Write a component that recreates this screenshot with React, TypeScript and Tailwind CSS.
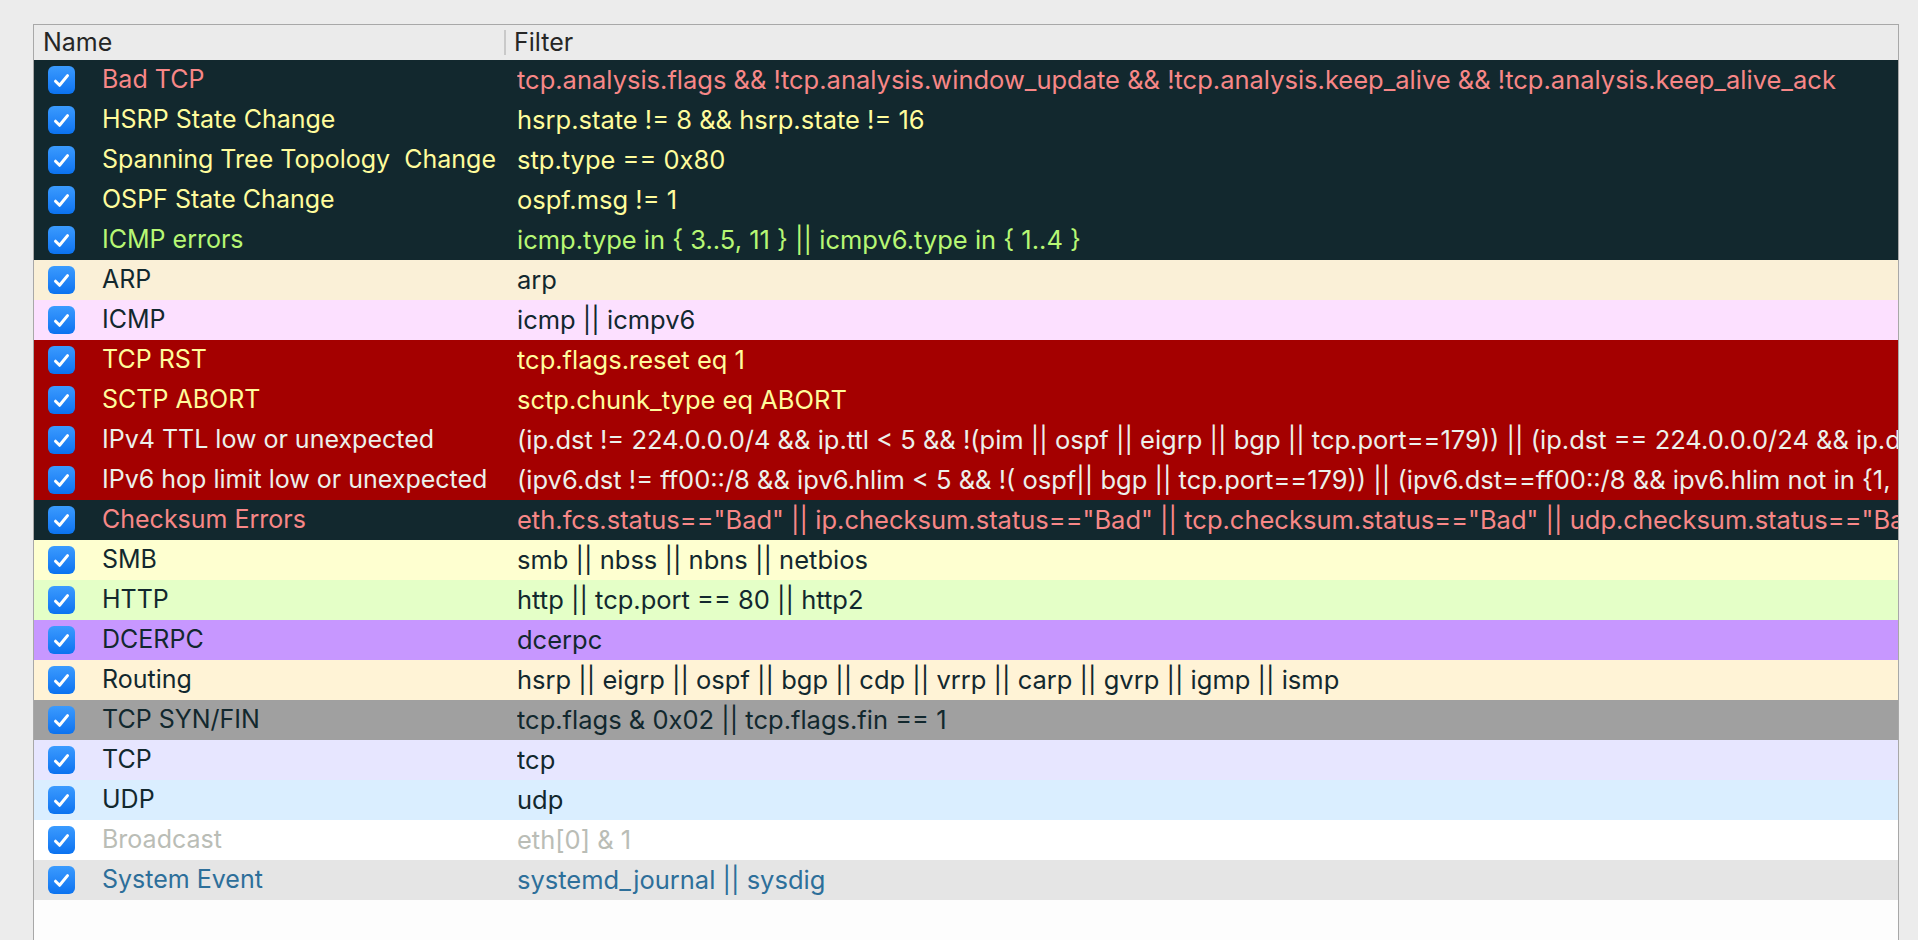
import React from "react";

type Row = { name: string; filter: string; bg: string; fg: string };

const DARK = "#12282e";
const rows: Row[] = [
  { name: "Bad TCP", filter: "tcp.analysis.flags && !tcp.analysis.window_update && !tcp.analysis.keep_alive && !tcp.analysis.keep_alive_ack", bg: DARK, fg: "#f78787" },
  { name: "HSRP State Change", filter: "hsrp.state != 8 && hsrp.state != 16", bg: DARK, fg: "#fffc9c" },
  { name: "Spanning Tree Topology  Change", filter: "stp.type == 0x80", bg: DARK, fg: "#fffc9c" },
  { name: "OSPF State Change", filter: "ospf.msg != 1", bg: DARK, fg: "#fffc9c" },
  { name: "ICMP errors", filter: "icmp.type in { 3..5, 11 } || icmpv6.type in { 1..4 }", bg: DARK, fg: "#b7f774" },
  { name: "ARP", filter: "arp", bg: "#faf0d7", fg: DARK },
  { name: "ICMP", filter: "icmp || icmpv6", bg: "#fce0ff", fg: DARK },
  { name: "TCP RST", filter: "tcp.flags.reset eq 1", bg: "#a40000", fg: "#fffc9c" },
  { name: "SCTP ABORT", filter: "sctp.chunk_type eq ABORT", bg: "#a40000", fg: "#fffc9c" },
  { name: "IPv4 TTL low or unexpected", filter: "(ip.dst != 224.0.0.0/4 && ip.ttl < 5 && !(pim || ospf || eigrp || bgp || tcp.port==179)) || (ip.dst == 224.0.0.0/24 && ip.dst", bg: "#a40000", fg: "#ecf0eb" },
  { name: "IPv6 hop limit low or unexpected", filter: "(ipv6.dst != ff00::/8 && ipv6.hlim < 5 && !( ospf|| bgp || tcp.port==179)) || (ipv6.dst==ff00::/8 && ipv6.hlim not in {1, 6", bg: "#a40000", fg: "#ecf0eb" },
  { name: "Checksum Errors", filter: "eth.fcs.status==\"Bad\" || ip.checksum.status==\"Bad\" || tcp.checksum.status==\"Bad\" || udp.checksum.status==\"Bad\"", bg: DARK, fg: "#f78787" },
  { name: "SMB", filter: "smb || nbss || nbns || netbios", bg: "#feffd0", fg: DARK },
  { name: "HTTP", filter: "http || tcp.port == 80 || http2", bg: "#e4ffc7", fg: DARK },
  { name: "DCERPC", filter: "dcerpc", bg: "#c797ff", fg: DARK },
  { name: "Routing", filter: "hsrp || eigrp || ospf || bgp || cdp || vrrp || carp || gvrp || igmp || ismp", bg: "#fff3d6", fg: DARK },
  { name: "TCP SYN/FIN", filter: "tcp.flags & 0x02 || tcp.flags.fin == 1", bg: "#a0a0a0", fg: DARK },
  { name: "TCP", filter: "tcp", bg: "#e7e6ff", fg: DARK },
  { name: "UDP", filter: "udp", bg: "#daeeff", fg: DARK },
  { name: "Broadcast", filter: "eth[0] & 1", bg: "#ffffff", fg: "#babdb6" },
  { name: "System Event", filter: "systemd_journal || sysdig", bg: "#e5e5e5", fg: "#2d6f9a" },
];

function Check() {
  return (
    <div className="w-[27px] h-[28px] rounded-[6px] bg-gradient-to-b from-[#3a9bff] to-[#0a72f0] flex items-center justify-center shrink-0">
      <svg width="17" height="15" viewBox="0 0 17 15" fill="none">
        <path d="M2.5 8.2 L6.6 12.3 L14.5 2.6" stroke="white" strokeWidth="3" strokeLinecap="round" strokeLinejoin="round" />
      </svg>
    </div>
  );
}

export default function App() {
  return (
    <div
      className="w-[1918px] h-[940px] bg-[#ececec] overflow-hidden pt-[24px] pl-[33px]"
      style={{ fontFamily: "Inter, 'Noto Sans', sans-serif" }}
    >
      <div className="w-[1866px] h-[1000px] border border-[#a8a8a8] bg-[#fdfdfd] flex flex-col">
        <div className="h-[35px] bg-[#ebebeb] flex items-center text-[25px] text-[#262626] shrink-0">
          <div className="w-[470px] pl-[9px] flex items-center h-full">Name</div>
          <div className="w-[2px] h-[25px] bg-[#c9c9c9]" />
          <div className="pl-[8px]">Filter</div>
        </div>
        {rows.map((r, i) => (
          <div
            key={i}
            className="h-[40px] flex items-center text-[25px] whitespace-pre overflow-hidden shrink-0"
            style={{ backgroundColor: r.bg, color: r.fg }}
          >
            <div className="w-[483px] shrink-0 flex items-center pl-[14px]">
              <Check />
              <span className="ml-[27px]">{r.name}</span>
            </div>
            <div className="min-w-0 flex-1 overflow-hidden text-[25.5px]">{r.filter}</div>
          </div>
        ))}
      </div>
    </div>
  );
}
